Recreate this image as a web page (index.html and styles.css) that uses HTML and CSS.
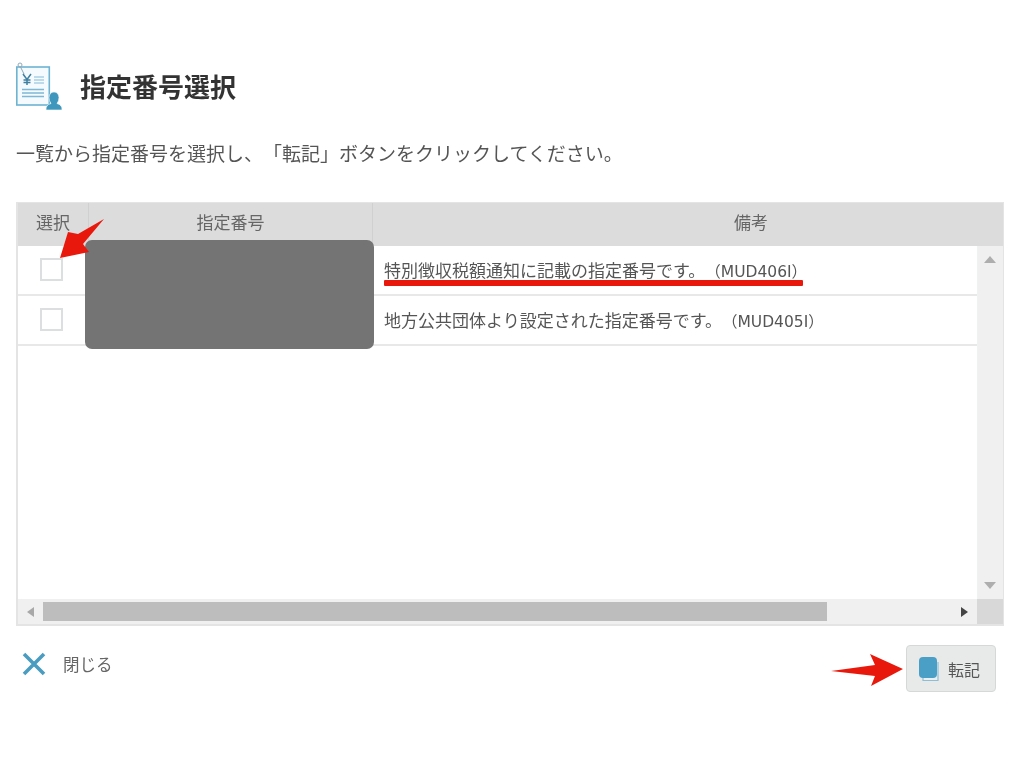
FILE: index.html
```html
<!DOCTYPE html>
<html lang="ja">
<head>
<meta charset="utf-8">
<title>指定番号選択</title>
<link rel="stylesheet" href="styles.css">
</head>
<body>
<main class="page">
  <header class="title-row">
    <svg class="title-icon" width="48" height="48" viewBox="0 0 48 48" aria-hidden="true">
      <rect x="0.800" y="5" width="32.500" height="38" fill="#f4fafd" stroke="#6db3d2" stroke-width="1.600"/>
      <circle cx="4" cy="3" r="2" fill="none" stroke="#8fa9b8" stroke-width="1"/>
      <path d="M4.500 5 L8 12" stroke="#8fa9b8" stroke-width="1" fill="none"/>
      <path d="M7 12 L11 17.500 L15 12 M11 17.500 V23 M7.500 18 H14.500 M7.500 20.500 H14.500" stroke="#3f7fa0" stroke-width="1.500" fill="none"/>
      <path d="M18 15 H28 M18 18 H28 M18 21 H28" stroke="#a9d0e2" stroke-width="1.500"/>
      <path d="M6 27.500 H28 M6 31 H28 M6 34.500 H28" stroke="#7db8d4" stroke-width="1.300"/>
      <path d="M30 48 Q29.500 43 35 41.500 Q33 39 33 35.500 Q33.500 30 38 30 Q42.500 30 43 35.500 Q43 39 41 41.500 Q46.500 43 46 48 Z" fill="#3f97bd" stroke="#fff" stroke-width="0.600"/>
    </svg>
    <h1 class="title">指定番号選択</h1>
  </header>
  <p class="lead">一覧から指定番号を選択し、「転記」ボタンをクリックしてください。</p>

  <section class="grid">
    <div class="grid-head">
      <div class="col-check">選択</div>
      <div class="col-number">指定番号</div>
      <div class="col-note">備考</div>
    </div>
    <div class="grid-mid">
      <div class="rows">
        <div class="row">
          <div class="col-check"><span class="box"></span></div>
          <div class="col-number"></div>
          <div class="col-note">特別徴収税額通知に記載の指定番号です。<span class="code">（MUD406I）</span></div>
        </div>
        <div class="row">
          <div class="col-check"><span class="box"></span></div>
          <div class="col-number"></div>
          <div class="col-note">地方公共団体より設定された指定番号です。<span class="code">（MUD405I）</span></div>
        </div>
      </div>
      <div class="vbar">
        <span class="tri tri-up"></span>
        <span class="tri tri-down"></span>
      </div>
    </div>
    <div class="hbar">
      <div class="hbar-track">
        <span class="tri tri-left"></span>
        <span class="hthumb"></span>
        <span class="tri tri-right"></span>
      </div>
      <div class="corner"></div>
    </div>
  </section>

  <footer class="actions">
    <a class="close">
      <svg width="24" height="24" viewBox="0 0 24 24" aria-hidden="true"><path d="M2 2 L22 22 M22 2 L2 22" stroke="#4a9cc0" stroke-width="3.600" fill="none"/></svg>
      <span>閉じる</span>
    </a>
    <button class="transfer" type="button">
      <svg width="24" height="26" viewBox="0 0 24 26" aria-hidden="true">
        <path d="M5 21 V24.500 H20 V6" fill="#e8f0f4" stroke="#8fbdd3" stroke-width="1.200"/>
        <rect x="1" y="1" width="18" height="21" rx="4" fill="#4a9fc6"/>
      </svg>
      <span>転記</span>
    </button>
  </footer>

  <div class="redact"></div>
  <div class="underline"></div>
  <svg class="arrow arrow-check" width="48" height="42" viewBox="0 0 48 42" aria-hidden="true">
    <path d="M46 0 L20 15 L10 13 L2 39 L31 33 L25 25 Z" fill="#e8190c"/>
  </svg>
  <svg class="arrow arrow-btn" width="76" height="34" viewBox="0 0 76 34" aria-hidden="true">
    <path d="M0 17 L44 11 L39 0 L72 15 L40 32 L44 22 Z" fill="#e8190c"/>
  </svg>
</main>
</body>
</html>
```
FILE: styles.css
```css
* { box-sizing: border-box; }
html, body { margin: 0; padding: 0; background: #fff; }
body {
  width: 1024px;
  height: 768px;
  overflow: hidden;
  font-family: "DejaVu Sans", "Noto Sans CJK JP", sans-serif;
  color: #555;
  text-spacing-trim: space-all;
}
.page {
  position: relative;
  height: 768px;
  padding: 62px 20px 0 16px;
  filter: blur(.45px);
}
.title-row {
  display: flex;
  align-items: center;
  gap: 16px;
  height: 48px;
}
.title {
  margin: 0;
  padding-top: 3px;
  font-size: 26px;
  line-height: 48px;
  font-weight: 700;
  color: #333;
}
.lead {
  margin: 29px 0 0;
  font-size: 19px;
  line-height: 30px;
  color: #555;
}
.grid {
  margin-top: 33px;
  width: 988px;
  height: 424px;
  border: 1px solid #e4e4e4;
  border-width: 1px 1px 2px 2px;
  display: flex;
  flex-direction: column;
  font-size: 17px;
}
.grid-head {
  display: flex;
  height: 43px;
  background: #dcdcdc;
  flex: none;
}
.grid-head > div {
  display: flex;
  align-items: center;
  justify-content: center;
  border-right: 1px solid #d0d0d0;
  color: #666;
  padding-bottom: 6px;
}
.grid-head > .col-note { border-right: 0; padding-left: 126px; }
.col-check { width: 71px; flex: none; }
.col-number { width: 284px; flex: none; }
.col-note { flex: 1; min-width: 0; }
.grid-mid { display: flex; flex: 1; min-height: 0; }
.rows { flex: 1; min-width: 0; }
.row {
  display: flex;
  align-items: center;
  height: 50px;
  border-bottom: 2px solid #e8e8e8;
}
.row .col-check { display: flex; justify-content: center; padding: 0 4px 2px 0; }
.row .col-note { padding: 0 0 2px 11px; white-space: nowrap; color: #555; }
.code { font-size: 15.500px; }
.box {
  display: block;
  width: 23px;
  height: 23px;
  background: #fff;
  border: 2px solid #dcdfdf;
}
.vbar {
  position: relative;
  width: 26px;
  flex: none;
  background: #f0f0f0;
  border-left: 1px solid #eef2f2;
}
.tri { display: block; width: 0; height: 0; border-style: solid; border-color: transparent; }
.vbar .tri { position: absolute; left: 6px; }
.tri-up { top: 10px; border-width: 0 6px 7px; border-bottom-color: #aeaeae; }
.tri-down { bottom: 10px; border-width: 7px 6px 0; border-top-color: #aeaeae; }
.hbar { display: flex; height: 25px; flex: none; }
.hbar-track {
  flex: 1;
  display: flex;
  align-items: center;
  background: #f0f0f0;
  padding-left: 9px;
  padding-right: 9px;
}
.tri-left { border-width: 5.500px 7px 5.500px 0; border-right-color: #a8a8a8; }
.hthumb {
  width: 784px;
  height: 19px;
  margin: 0 auto 0 9px;
  background: #bdbdbd;
}
.tri-right { border-width: 5.500px 0 5.500px 7px; border-left-color: #444; }
.corner { width: 26px; background: #d8d8d8; }
.actions {
  display: flex;
  justify-content: space-between;
  align-items: flex-start;
  padding: 19px 8px 0 6px;
}
.close {
  display: flex;
  align-items: center;
  gap: 17px;
  margin-top: 7px;
  font-size: 16.500px;
  color: #666;
}
.transfer {
  display: flex;
  align-items: center;
  justify-content: center;
  gap: 6px;
  width: 90px;
  height: 47px;
  padding: 0 4px 0 0;
  background: #e8eaea;
  border: 1px solid #d6d8d8;
  border-radius: 4px;
  font: inherit;
  font-size: 16px;
  color: #555;
}
.redact {
  position: absolute;
  left: 85px;
  top: 240px;
  width: 289px;
  height: 109px;
  background: #747474;
  border-radius: 7px;
}
.underline {
  position: absolute;
  left: 384px;
  top: 280px;
  width: 419px;
  height: 6px;
  background: #e8190c;
  border-radius: 1px;
}
.arrow { position: absolute; }
.arrow-check { left: 58px; top: 219px; }
.arrow-btn { left: 831px; top: 654px; }
```
